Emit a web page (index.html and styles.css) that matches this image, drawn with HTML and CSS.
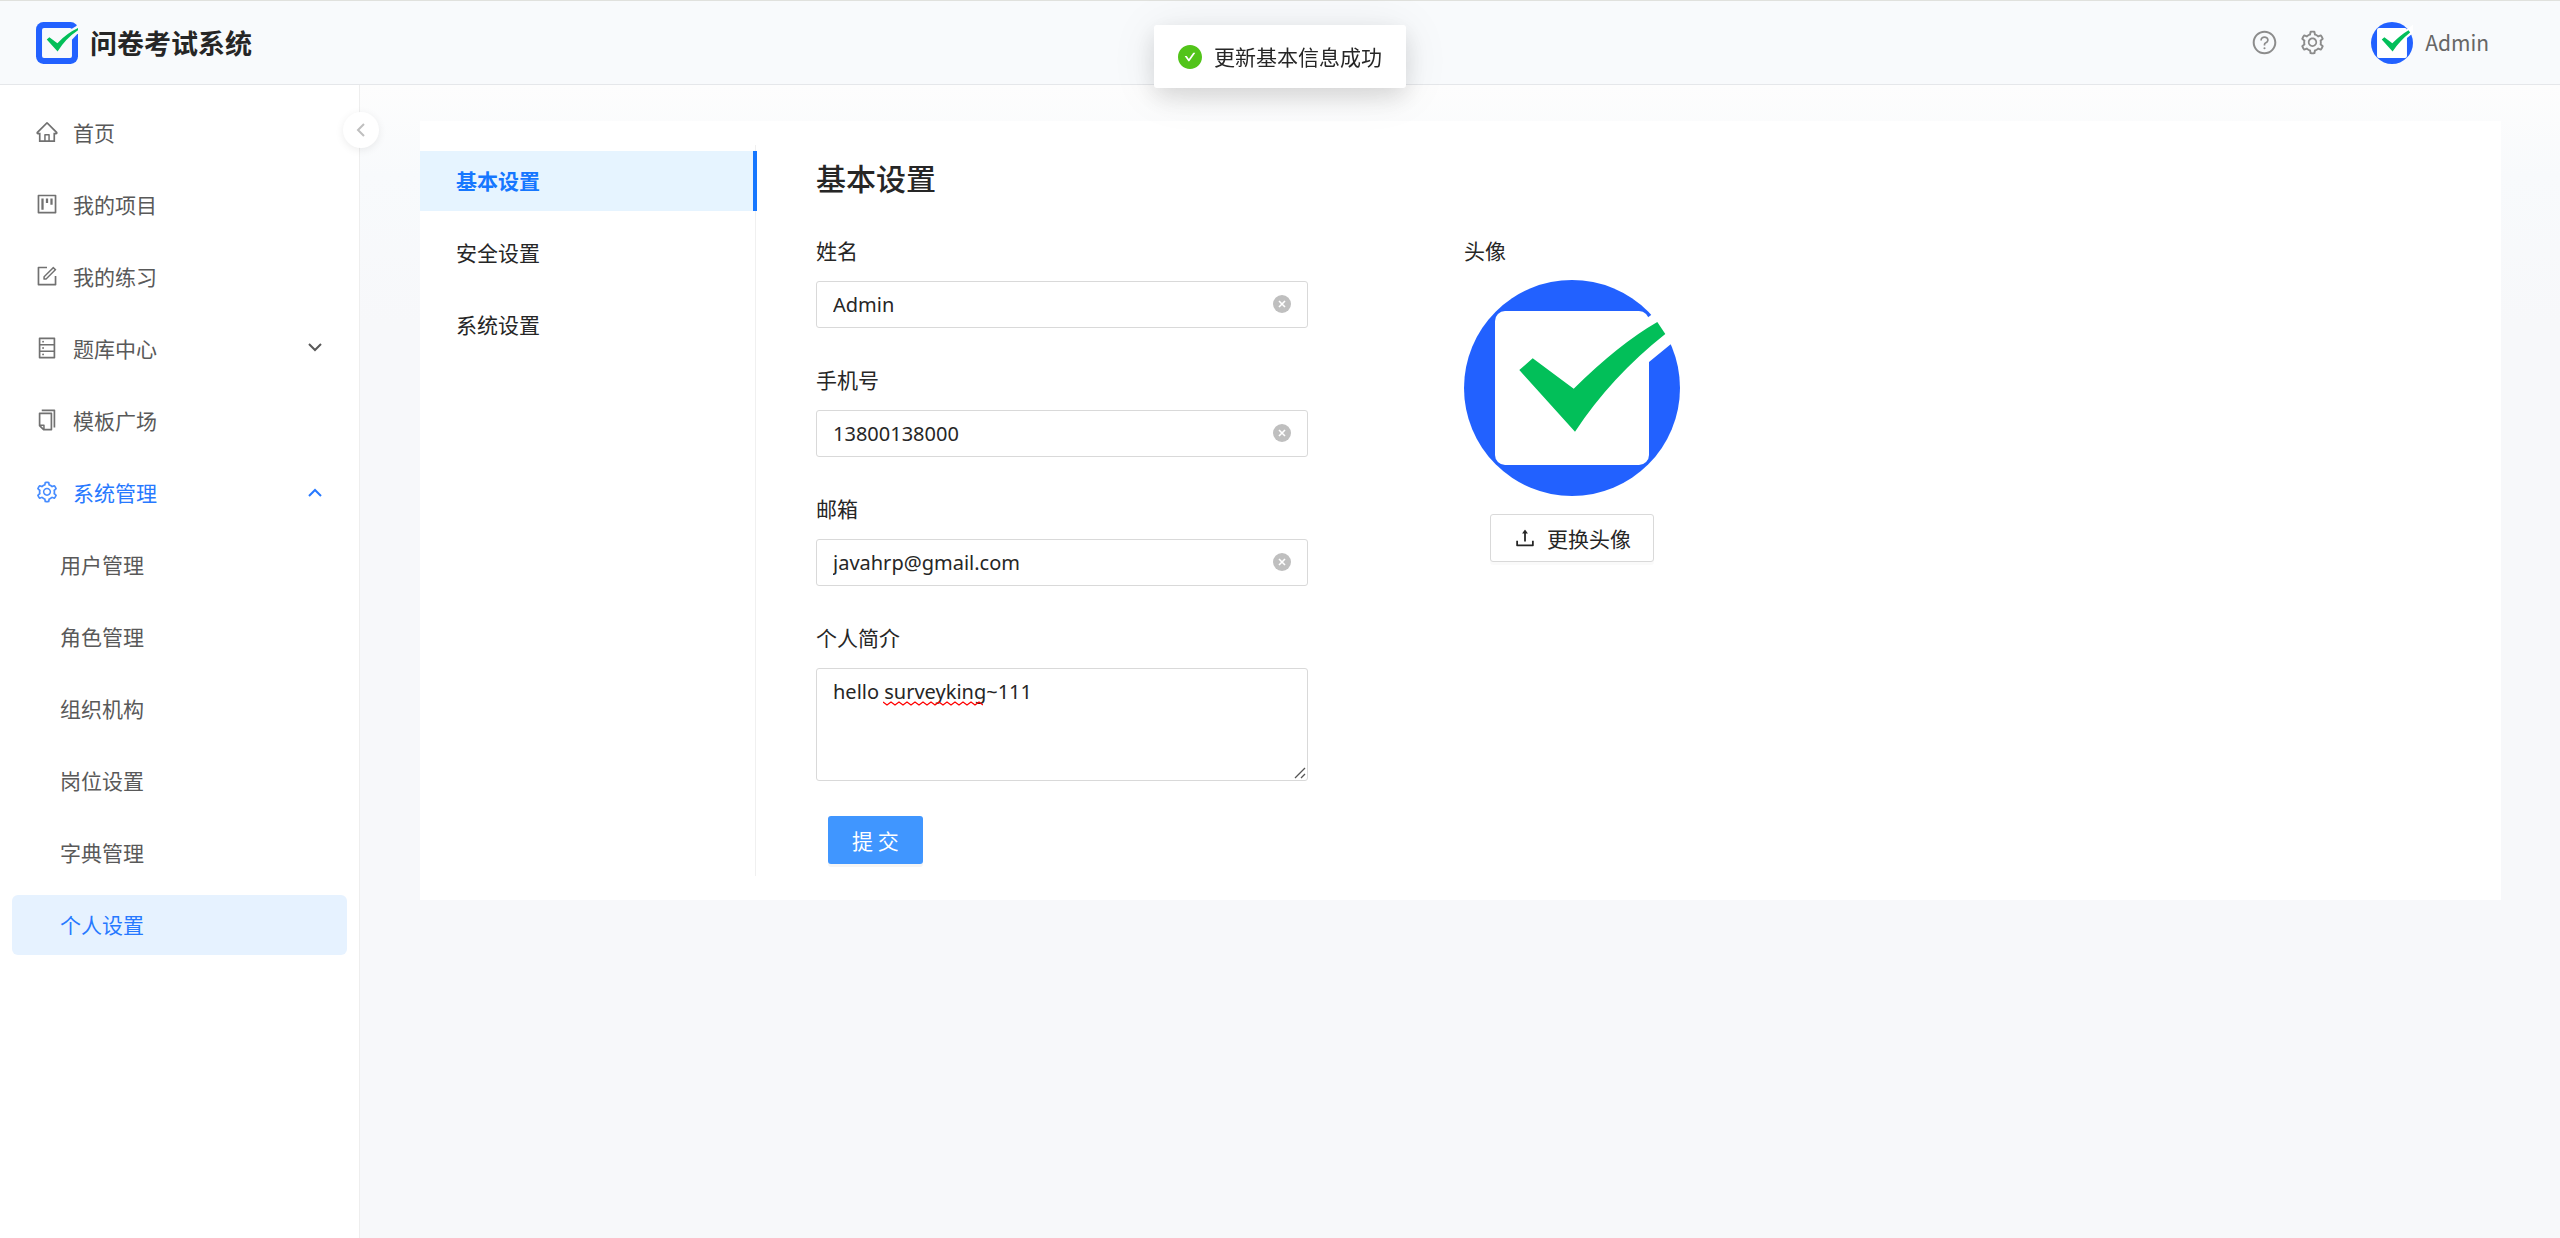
FILE: index.html
```html
<!DOCTYPE html>
<html lang="zh-CN">
<head>
  <meta charset="UTF-8" />
  <meta name="viewport" content="width=device-width, initial-scale=1.0"/>
  <title>问卷考试系统</title>
  <link rel="stylesheet" href="styles.css">
</head>
<body>
  <svg class="sprite" aria-hidden="true">
    <symbol id="icon-setting" viewBox="0 0 1024 1024">
      <path d="M924.8 625.7l-65.5-56c3.1-19 4.7-38.4 4.7-57.8s-1.6-38.8-4.7-57.8l65.5-56a32.03 32.03 0 009.3-35.2l-.9-2.6a443.74 443.74 0 00-79.7-137.9l-1.8-2.1a32.12 32.12 0 00-35.1-9.5l-81.3 28.9c-30-24.6-63.5-44-99.7-57.6l-15.7-85a32.05 32.05 0 00-25.8-25.7l-2.7-.5c-52.1-9.4-106.9-9.4-159 0l-2.7.5a32.05 32.05 0 00-25.8 25.7l-15.8 85.4a351.86 351.86 0 00-99 57.4l-81.9-29.1a32 32 0 00-35.1 9.5l-1.8 2.1a446.02 446.02 0 00-79.7 137.9l-.9 2.6c-4.5 12.5-.8 26.5 9.3 35.2l66.3 56.6c-3.1 18.8-4.6 38-4.6 57.1 0 19.2 1.5 38.4 4.6 57.1L99 625.5a32.03 32.03 0 00-9.3 35.2l.9 2.6c18.1 50.4 44.9 96.9 79.7 137.9l1.8 2.1a32.12 32.12 0 0035.1 9.5l81.9-29.1c29.8 24.5 63.1 43.9 99 57.4l15.8 85.4a32.05 32.05 0 0025.8 25.7l2.7.5a449.4 449.4 0 00159 0l2.7-.5a32.05 32.05 0 0025.8-25.7l15.7-85a350 350 0 0099.7-57.6l81.3 28.9a32 32 0 0035.1-9.5l1.8-2.1c34.8-41.1 61.6-87.5 79.7-137.9l.9-2.6c4.5-12.3.8-26.3-9.3-35zM788.3 465.9c2.5 15.1 3.8 30.6 3.8 46.1s-1.3 31-3.8 46.1l-6.6 40.1 74.7 63.9a370.03 370.03 0 01-42.6 73.6L721 702.8l-31.4 25.8c-23.9 19.6-50.5 35-79.3 45.8l-38.1 14.3-17.9 97a377.5 377.5 0 01-85 0l-17.9-97.2-37.8-14.5c-28.5-10.8-55-26.2-78.7-45.7l-31.4-25.9-93.4 33.2c-17-22.9-31.2-47.6-42.6-73.6l75.5-64.5-6.5-40c-2.4-14.9-3.7-30.3-3.7-45.5 0-15.3 1.2-30.6 3.7-45.5l6.5-40-75.5-64.5c11.3-26.1 25.6-50.7 42.6-73.6l93.4 33.2 31.4-25.9c23.7-19.5 50.2-34.9 78.7-45.7l37.9-14.3 17.9-97.2c28.1-3.2 56.8-3.2 85 0l17.9 97 38.1 14.3c28.7 10.8 55.4 26.2 79.3 45.8l31.4 25.8 92.8-32.9c17 22.9 31.2 47.6 42.6 73.6L781.8 426l6.5 39.9zM512 326c-97.2 0-176 78.8-176 176s78.8 176 176 176 176-78.8 176-176-78.8-176-176-176zm79.2 255.2A111.6 111.6 0 01512 614c-29.9 0-58-11.7-79.2-32.8A111.6 111.6 0 01400 502c0-29.9 11.7-58 32.8-79.2C454 401.6 482.1 390 512 390c29.9 0 58 11.6 79.2 32.8A111.6 111.6 0 01624 502c0 29.9-11.7 58-32.8 79.2z"/>
    </symbol>
    <symbol id="icon-clear" viewBox="0 0 18 18">
      <circle cx="9" cy="9" r="9"/>
      <path d="M6 6l6 6M12 6l-6 6" stroke="#fff" stroke-width="1.6"/>
    </symbol>
    <symbol id="icon-avatar" viewBox="0 0 216 216">
      <circle cx="108" cy="108" r="108" fill="#2261ff"/>
      <rect x="31" y="31" width="154" height="154" rx="10" fill="#fff"/>
      <path d="M172 46L216 14V57L207 64L185 82L170 90z" fill="#fff"/>
      <path d="M68.700 78.300L109.700 108.700Q155 64 193.300 42L201.300 54Q147 97 111 151.700L55.300 90z" fill="#02bf59"/>
    </symbol>
  </svg>

  <header class="header">
    <a class="brand" href="#">
      <svg class="brand-logo" viewBox="0 0 216 216">
        <rect width="216" height="216" rx="38" fill="#2261ff"/>
        <rect class="logo-gap" x="31" y="31" width="154" height="154" rx="10"/>
        <path class="logo-gap" d="M178 38L216 16V58L186 90L160 90z"/>
        <path d="M68.700 78.300L110 108.700Q158 58 216 31V42Q150 86 111 151.700L55.300 90z" fill="#02bf59"/>
      </svg>
      <h1>问卷考试系统</h1>
    </a>
    <div class="header-right">
      <button class="icon-btn" aria-label="帮助">
        <svg viewBox="0 0 1024 1024"><path d="M512 64C264.600 64 64 264.600 64 512s200.600 448 448 448 448-200.600 448-448S759.400 64 512 64zm0 820c-205.400 0-372-166.600-372-372s166.600-372 372-372 372 166.600 372 372-166.600 372-372 372z"/><path d="M623.600 316.700C593.600 290.400 554 276 512 276s-81.600 14.500-111.600 40.700C369.200 344 352 380.700 352 420v7.600c0 4.400 3.600 8 8 8h48c4.400 0 8-3.600 8-8V420c0-44.100 43.100-80 96-80s96 35.900 96 80c0 31.100-22 59.600-56.100 72.700-21.200 8.100-39.200 22.300-52.100 40.900-13.100 19-19.900 41.800-19.900 64.900V620c0 4.400 3.600 8 8 8h48c4.400 0 8-3.600 8-8v-22.700a48.300 48.300 0 0130.900-44.800c59-22.700 97.100-74.700 97.100-132.500.1-39.300-17.100-76-48.300-103.300zM472 732a40 40 0 1080 0 40 40 0 10-80 0z"/></svg>
      </button>
      <button class="icon-btn" aria-label="设置">
        <svg><use href="#icon-setting"/></svg>
      </button>
      <a class="user" href="#">
        <svg class="user-avatar"><use href="#icon-avatar"/></svg>
        <span>Admin</span>
      </a>
    </div>
  </header>

  <div class="layout">
    <aside class="sidebar">
      <nav class="menu">
        <a class="menu-item" href="#">
          <svg class="menu-icon" viewBox="0 0 1024 1024"><path d="M946.500 505L560.100 118.800l-25.900-25.900a31.500 31.500 0 00-44.400 0L77.500 505a63.900 63.900 0 00-18.800 46c.4 35.200 29.700 63.300 64.900 63.300h42.500V940h691.800V614.300h43.400c17.100 0 33.200-6.700 45.300-18.800a63.600 63.600 0 0018.700-45.300c0-17-6.700-33.100-18.900-45.200zM568 868H456V664h112v204zm217.900-325.700V868H632V640c0-22.100-17.900-40-40-40H432c-22.100 0-40 17.900-40 40v228H238.100V542.300h-96l370-369.700 23.100 23.100L882 542.300h-96.100z"/></svg>
          <span>首页</span>
        </a>
        <a class="menu-item" href="#">
          <svg class="menu-icon" viewBox="0 0 1024 1024"><path d="M280 752h80c4.400 0 8-3.600 8-8V280c0-4.400-3.600-8-8-8h-80c-4.400 0-8 3.600-8 8v464c0 4.400 3.600 8 8 8zm192-280h80c4.400 0 8-3.600 8-8V280c0-4.400-3.600-8-8-8h-80c-4.400 0-8 3.600-8 8v184c0 4.400 3.600 8 8 8zm192 72h80c4.400 0 8-3.600 8-8V280c0-4.400-3.600-8-8-8h-80c-4.400 0-8 3.600-8 8v256c0 4.400 3.600 8 8 8zm216-432H144c-17.700 0-32 14.300-32 32v736c0 17.700 14.300 32 32 32h736c17.700 0 32-14.300 32-32V144c0-17.700-14.300-32-32-32zm-40 728H184V184h656v656z"/></svg>
          <span>我的项目</span>
        </a>
        <a class="menu-item" href="#">
          <svg class="menu-icon" viewBox="0 0 1024 1024"><path d="M904 512h-56c-4.400 0-8 3.600-8 8v320H184V184h320c4.400 0 8-3.600 8-8v-56c0-4.400-3.600-8-8-8H144c-17.700 0-32 14.300-32 32v736c0 17.700 14.300 32 32 32h736c17.700 0 32-14.300 32-32V520c0-4.400-3.600-8-8-8z"/><path d="M355.900 534.900L354 653.800c-.1 8.900 7.100 16.200 16 16.200h.4l118-2.900c2-.1 4-.9 5.400-2.300l415.900-415c3.100-3.100 3.100-8.200 0-11.300L785.400 114.300c-1.600-1.600-3.600-2.300-5.700-2.300s-4.100.8-5.700 2.300l-415.800 415a8.300 8.300 0 00-2.300 5.600zm63.500 23.600L779.700 199l45.200 45.100-360.500 359.700-45.700 1.100.7-46.400z"/></svg>
          <span>我的练习</span>
        </a>
        <a class="menu-item" href="#">
          <svg class="menu-icon" viewBox="0 0 1024 1024"><path d="M832 64H192c-17.700 0-32 14.300-32 32v832c0 17.700 14.300 32 32 32h640c17.700 0 32-14.300 32-32V96c0-17.700-14.300-32-32-32zm-600 72h560v208H232V136zm560 480H232V408h560v208zm0 272H232V680h560v208zM304 240a40 40 0 1080 0 40 40 0 10-80 0zm0 272a40 40 0 1080 0 40 40 0 10-80 0zm0 272a40 40 0 1080 0 40 40 0 10-80 0z"/></svg>
          <span>题库中心</span>
          <svg class="menu-arrow" viewBox="0 0 14 10"><path d="M1 1l6 6 6-6"/></svg>
        </a>
        <a class="menu-item" href="#">
          <svg class="menu-icon" viewBox="0 0 1024 1024"><path d="M832 64H296c-4.400 0-8 3.600-8 8v56c0 4.400 3.600 8 8 8h496v688c0 4.400 3.600 8 8 8h56c4.400 0 8-3.600 8-8V96c0-17.700-14.300-32-32-32zM704 192H192c-17.700 0-32 14.300-32 32v530.700c0 8.500 3.400 16.600 9.400 22.600l173.300 173.300c2.200 2.200 4.700 4 7.400 5.500v1.900h4.200c3.500 1.300 7.200 2 11 2H704c17.700 0 32-14.300 32-32V224c0-17.700-14.300-32-32-32zM350 856.200L263.900 770H350v86.200zM664 888H414V746c0-22.100-17.900-40-40-40H232V264h432v624z"/></svg>
          <span>模板广场</span>
        </a>
        <a class="menu-item open" href="#">
          <svg class="menu-icon"><use href="#icon-setting"/></svg>
          <span>系统管理</span>
          <svg class="menu-arrow" viewBox="0 0 14 10"><path d="M1 9l6-6 6 6"/></svg>
        </a>
        <a class="menu-item sub" href="#">用户管理</a>
        <a class="menu-item sub" href="#">角色管理</a>
        <a class="menu-item sub" href="#">组织机构</a>
        <a class="menu-item sub" href="#">岗位设置</a>
        <a class="menu-item sub" href="#">字典管理</a>
        <a class="menu-item sub active" href="#">个人设置</a>
      </nav>
      <button class="collapse-btn" aria-label="收起菜单">
        <svg viewBox="0 0 10 14"><path d="M8 1L2 7l6 6"/></svg>
      </button>
    </aside>

    <main class="content">
      <div class="card">
        <nav class="tabs">
          <a class="tab active" href="#">基本设置</a>
          <a class="tab" href="#">安全设置</a>
          <a class="tab" href="#">系统设置</a>
        </nav>

        <section class="panel">
          <h2>基本设置</h2>
          <div class="panel-body">
            <form class="profile-form">
              <div class="form-item">
                <label for="name">姓名</label>
                <div class="input-box">
                  <input type="text" id="name" value="Admin" />
                  <button type="button" class="clear-btn" aria-label="清除姓名"><svg><use href="#icon-clear"/></svg></button>
                </div>
              </div>
              <div class="form-item">
                <label for="phone">手机号</label>
                <div class="input-box">
                  <input type="text" id="phone" value="13800138000" />
                  <button type="button" class="clear-btn" aria-label="清除手机号"><svg><use href="#icon-clear"/></svg></button>
                </div>
              </div>
              <div class="form-item">
                <label for="email">邮箱</label>
                <div class="input-box">
                  <input type="text" id="email" value="javahrp@gmail.com" />
                  <button type="button" class="clear-btn" aria-label="清除邮箱"><svg><use href="#icon-clear"/></svg></button>
                </div>
              </div>
              <div class="form-item">
                <label for="profile">个人简介</label>
                <div class="textarea-box">
                  <textarea id="profile" spellcheck="false">hello surveyking~111</textarea>
                  <svg class="spell-mark" viewBox="0 0 100 5"><path d="M0 1l4 3 4-3 4 3 4-3 4 3 4-3 4 3 4-3 4 3 4-3 4 3 4-3 4 3 4-3 4 3 4-3 4 3 4-3 4 3 4-3 4 3 4-3 4 3 4-3 4 3"/></svg>
                  <svg class="resize-mark" viewBox="0 0 12 12"><path d="M1 11L11 1M7 11l4-4"/></svg>
                </div>
              </div>
              <button type="submit" class="btn btn-primary">提 交</button>
            </form>

            <div class="avatar-box">
              <div class="avatar-title">头像</div>
              <svg class="avatar"><use href="#icon-avatar"/></svg>
              <button type="button" class="btn btn-upload">
                <svg viewBox="0 0 1024 1024"><path d="M400 317.700h73.900V656c0 4.400 3.600 8 8 8h60c4.400 0 8-3.600 8-8V317.700H624c6.700 0 10.400-7.700 6.300-12.900L518.300 163a8 8 0 00-12.600 0l-112 141.700c-4.100 5.300-.4 13 6.300 13zM878 626h-60c-4.400 0-8 3.600-8 8v154H214V634c0-4.400-3.600-8-8-8h-60c-4.400 0-8 3.600-8 8v198c0 17.700 14.300 32 32 32h684c17.700 0 32-14.300 32-32V634c0-4.400-3.600-8-8-8z"/></svg>
                <span>更换头像</span>
              </button>
            </div>
          </div>
        </section>
      </div>
    </main>
  </div>

  <div class="message" role="status">
    <svg viewBox="64 64 896 896"><path d="M512 64C264.600 64 64 264.600 64 512s200.600 448 448 448 448-200.600 448-448S759.400 64 512 64zm193.500 301.700l-210.600 292a31.800 31.800 0 01-51.700 0L318.500 484.900c-3.800-5.300 0-12.700 6.500-12.700h46.900c10.200 0 19.900 4.900 25.900 13.300l71.200 98.800 157.200-218c6-8.300 15.600-13.300 25.900-13.300H699c6.500 0 10.300 7.400 6.500 12.700z"/></svg>
    <span>更新基本信息成功</span>
  </div>
</body>
</html>
```

FILE: styles.css
```css
* {
  box-sizing: border-box;
}

body {
  margin: 0;
  min-height: 100vh;
  display: flex;
  flex-direction: column;
  font-family: "Noto Sans CJK SC", sans-serif;
  font-size: 21px;
  line-height: 33px;
  color: #262626;
  background: #f7f8fa;
}

a {
  color: inherit;
  text-decoration: none;
}

button {
  font-family: inherit;
  font-size: inherit;
  color: inherit;
  cursor: pointer;
}

svg {
  display: block;
  fill: currentColor;
}

.sprite {
  position: absolute;
  width: 0;
  height: 0;
}

/* header */
.header {
  display: flex;
  align-items: center;
  justify-content: space-between;
  height: 85px;
  padding: 0 71px 0 36px;
  background: #f8fafc;
  border-top: 1px solid #e0e1dd;
  border-bottom: 1px solid #e5e7ea;
}

.brand {
  display: flex;
  align-items: center;
  gap: 12px;
}

.brand h1 {
  margin: 0;
  font-size: 27px;
  font-weight: bold;
}

.brand-logo,
.user-avatar {
  width: 42px;
  height: 42px;
}

.logo-gap {
  fill: #f8fafc;
}

.header-right {
  display: flex;
  align-items: center;
  gap: 21px;
  color: #8c8c8c;
}

.icon-btn {
  padding: 0;
  border: none;
  background: none;
}

.icon-btn svg {
  width: 27px;
  height: 27px;
}

.user {
  display: flex;
  align-items: center;
  gap: 12px;
  margin-left: 24px;
  color: #666;
}

/* sidebar */
.layout {
  flex: 1;
  display: flex;
}

.sidebar {
  position: relative;
  width: 360px;
  flex-shrink: 0;
  background: #fff;
  border-right: 1px solid #eee;
}

.menu {
  display: flex;
  flex-direction: column;
  gap: 12px;
  padding: 18px 12px;
}

.menu-item {
  display: flex;
  align-items: center;
  gap: 14px;
  height: 60px;
  padding: 0 23px 2px;
  border-radius: 6px;
  color: #595959;
}

.menu-item.sub {
  padding-left: 48px;
}

.menu-item.open {
  color: #2779ff;
}

.menu-item.active {
  color: #2779ff;
  background: #e6f2ff;
}

.menu-icon {
  width: 24px;
  height: 24px;
  opacity: 0.85;
}

.menu-arrow {
  width: 14px;
  height: 10px;
  margin-left: auto;
  margin-right: 2px;
  fill: none;
  stroke: currentColor;
  stroke-width: 2;
}

.collapse-btn {
  position: absolute;
  top: 27px;
  right: -20px;
  display: flex;
  align-items: center;
  justify-content: center;
  width: 36px;
  height: 36px;
  padding: 0;
  border: none;
  border-radius: 50%;
  background: #fff;
  box-shadow: 0 2px 8px rgba(0, 0, 0, 0.08);
  color: #bfbfbf;
}

.collapse-btn svg {
  width: 10px;
  height: 14px;
  fill: none;
  stroke: currentColor;
  stroke-width: 2;
}

/* content */
.content {
  flex: 1;
  padding: 36px 59px 36px 60px;
  background: linear-gradient(#fdfdfd, #f8fafc 90px, #f7f8fa 240px);
}

.card {
  display: flex;
  padding: 24px 0;
  background: #fff;
}

.tabs {
  display: flex;
  flex-direction: column;
  gap: 12px;
  width: 336px;
  padding-top: 6px;
  border-right: 1px solid #f0f0f0;
}

.tab {
  display: flex;
  align-items: center;
  height: 60px;
  padding: 0 36px 2px;
}

.tab.active {
  margin-right: -2px;
  font-weight: bold;
  color: #1677ff;
  background: #e6f4ff;
  border-right: 4px solid #1677ff;
}

.panel {
  flex: 1;
  padding: 10px 60px 12px;
}

.panel h2 {
  margin: 0 0 34px;
  font-size: 30px;
  line-height: 45px;
  font-weight: 500;
}

.panel-body {
  display: flex;
  gap: 156px;
}

.profile-form {
  width: 492px;
  max-width: 100%;
}

.form-item {
  display: flex;
  flex-direction: column;
  gap: 14px;
  margin-bottom: 35px;
}

.input-box,
.textarea-box {
  position: relative;
}

input,
textarea {
  display: block;
  width: 100%;
  border: 1px solid #d9d9d9;
  border-radius: 3px;
  background: #fff;
  color: #262626;
  font-family: "Noto Sans", "Noto Sans CJK SC", sans-serif;
  font-size: 20px;
  line-height: 33px;
  outline: none;
}

input {
  height: 47px;
  padding: 0 48px 0 16px;
}

textarea {
  height: 113px;
  padding: 6px 16px;
  resize: vertical;
}

input:focus,
textarea:focus {
  border-color: #4096ff;
}

.clear-btn {
  position: absolute;
  top: 14px;
  right: 17px;
  padding: 0;
  border: none;
  background: none;
  color: #bfbfbf;
}

.clear-btn svg {
  width: 18px;
  height: 18px;
}

.spell-mark {
  position: absolute;
  top: 33px;
  left: 67px;
  width: 100px;
  height: 5px;
  fill: none;
  stroke: #f00;
  stroke-width: 1.3;
  pointer-events: none;
}

.resize-mark {
  position: absolute;
  right: 2px;
  bottom: 2px;
  width: 12px;
  height: 12px;
  fill: none;
  stroke: #555;
  stroke-width: 1.3;
  background: #fff;
  pointer-events: none;
}

.btn {
  height: 48px;
  padding: 0 24px;
  border: none;
  border-radius: 3px;
}

.btn-primary {
  margin-left: 12px;
  color: #fff;
  background: #4096ff;
  box-shadow: 0 3px 0 rgba(0, 0, 0, 0.04);
}

.btn-upload {
  display: flex;
  align-items: center;
  gap: 10px;
  padding: 0 22px;
  border: 1px solid #d9d9d9;
  background: #fff;
  box-shadow: 0 3px 0 rgba(0, 0, 0, 0.02);
}

.btn-upload svg {
  width: 24px;
  height: 24px;
}

.avatar-box {
  display: flex;
  flex-direction: column;
  align-items: center;
}

.avatar-title {
  align-self: flex-start;
  margin-bottom: 13px;
}

.avatar {
  width: 216px;
  height: 216px;
  margin-bottom: 18px;
}

/* success message */
.message {
  position: fixed;
  top: 25px;
  left: 50%;
  transform: translateX(-50%);
  display: flex;
  align-items: center;
  gap: 12px;
  padding: 15px 24px;
  border-radius: 3px;
  background: #fff;
  box-shadow: 0 9px 24px rgba(0, 0, 0, 0.12), 0 4px 48px rgba(0, 0, 0, 0.08);
}

.message svg {
  width: 24px;
  height: 24px;
  color: #52c41a;
}

@media screen and (max-width: 1600px) {
  .panel-body {
    flex-wrap: wrap;
    gap: 36px;
  }
}
```
